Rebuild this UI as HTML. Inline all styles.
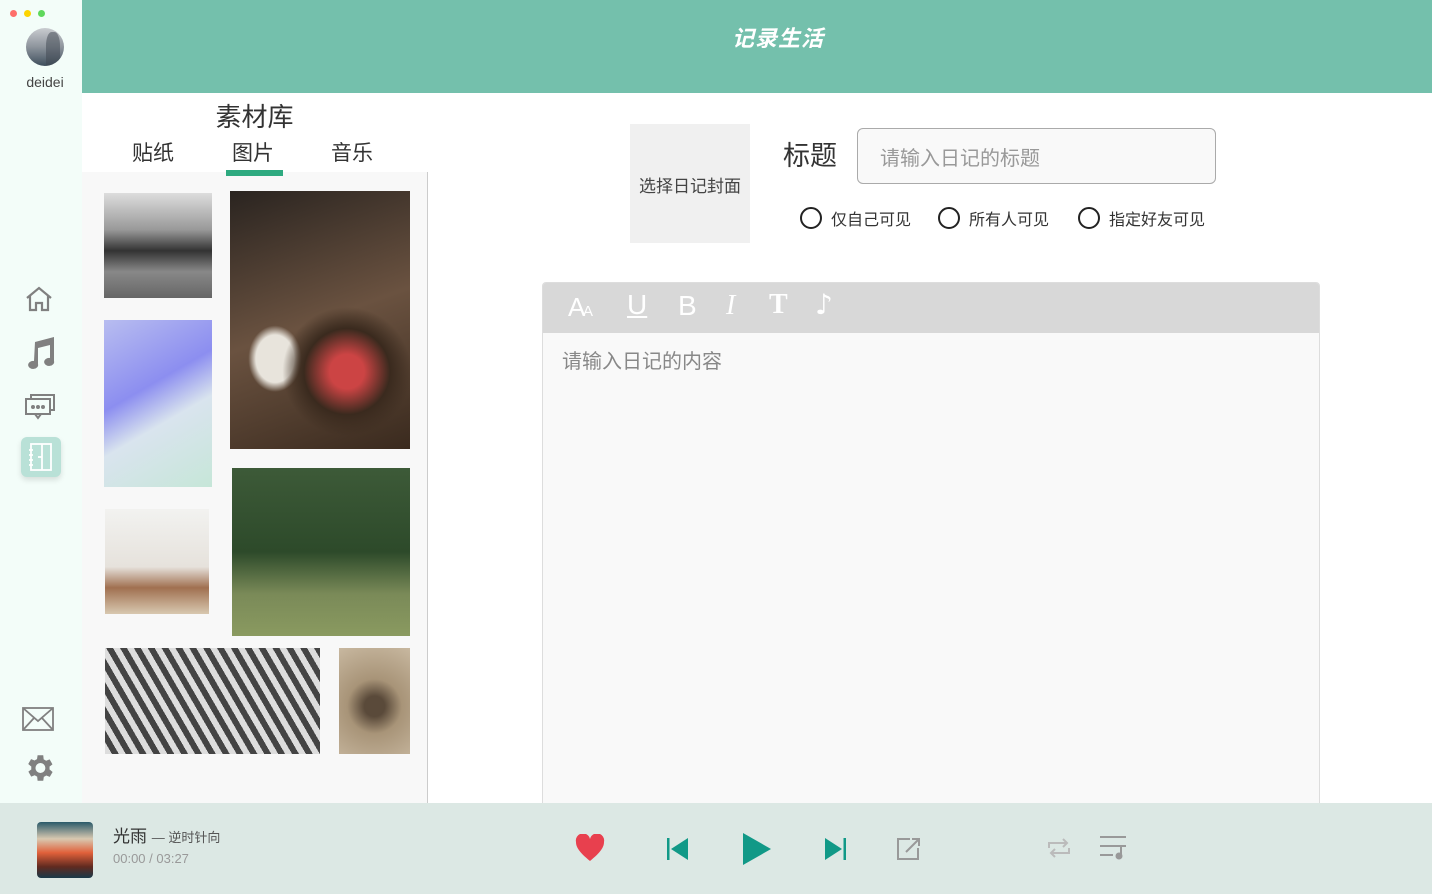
<!DOCTYPE html>
<html><head><meta charset="utf-8"><style>
*{margin:0;padding:0;box-sizing:border-box}
body{width:1432px;height:894px;overflow:hidden;font-family:"Liberation Sans","Noto Sans CJK SC",sans-serif;background:#fff;position:relative}
.a{position:absolute}
</style></head><body>
<div class="a" style="left:0;top:0;width:82px;height:803px;background:#f3fdf9"></div>
<div class="a" style="left:10px;top:10px;width:7px;height:7px;border-radius:50%;background:#fe6e6a"></div>
<div class="a" style="left:24px;top:10px;width:7px;height:7px;border-radius:50%;background:#fdd400"></div>
<div class="a" style="left:38px;top:10px;width:7px;height:7px;border-radius:50%;background:#5fd85c"></div>
<div class="a" style="left:26px;top:28px;width:38px;height:38px;border-radius:50%;background:linear-gradient(180deg,#c9ccd0 0%,#8d949c 50%,#3e4e5c 100%);overflow:hidden"><div style="position:absolute;left:20px;top:4px;width:14px;height:34px;border-radius:40% 40% 0 0;background:#3e4650;opacity:.5"></div></div>
<div class="a" style="left:0;top:74px;width:90px;text-align:center;font-size:14px;color:#444">deidei</div>
<svg class="a" style="left:24px;top:284px" width="30" height="30" viewBox="0 0 30 30" fill="none" stroke="#808080" stroke-width="2.2"><path d="M3 14 L15 4 L27 14 M6 12 V26 H12 V19 H18 V26 H24 V12"/></svg>
<svg class="a" style="left:24px;top:334px" width="34" height="36" viewBox="0 0 34 36" fill="#808080"><path d="M11 8 L30 3 V27 A5 4 0 1 1 26 24 V11 L14 14 V30 A5 4 0 1 1 10 27 Z"/></svg>
<svg class="a" style="left:24px;top:392px" width="32" height="30" viewBox="0 0 32 30" fill="none" stroke="#808080" stroke-width="2"><rect x="2" y="7" width="24" height="15"/><path d="M7 7 V3 H30 V18 H26"/><path d="M11 22 L14 26 L17 22"/><circle cx="9" cy="15" r="1" fill="#808080"/><circle cx="14" cy="15" r="1" fill="#808080"/><circle cx="19" cy="15" r="1" fill="#808080"/></svg>
<div class="a" style="left:21px;top:437px;width:40px;height:40px;border-radius:6px;background:#b9e1d7;box-shadow:0 3px 6px rgba(0,0,0,.12)"></div>
<svg class="a" style="left:27px;top:442px" width="28" height="30" viewBox="0 0 28 30" fill="none" stroke="#fff" stroke-width="1.8"><rect x="4" y="2" width="20" height="26"/><path d="M15 2 V28 M2 8 H6 M2 13 H6 M2 18 H6 M2 23 H6 M11 15 H15"/></svg>
<svg class="a" style="left:22px;top:706px" width="32" height="26" viewBox="0 0 32 26" fill="none" stroke="#808080" stroke-width="1.8"><rect x="1" y="2" width="30" height="22"/><path d="M1 2 L16 15 L31 2 M1 24 L12 12 M31 24 L20 12"/></svg>
<svg class="a" style="left:22px;top:751px" width="34" height="34" viewBox="0 0 24 24" fill="#808080"><path d="M19.4 13a7.5 7.5 0 0 0 0-2l2.1-1.6-2-3.5-2.5 1a7 7 0 0 0-1.7-1L15 3h-4l-.4 2.7a7 7 0 0 0-1.7 1l-2.5-1-2 3.5L6.6 11a7.5 7.5 0 0 0 0 2l-2.1 1.6 2 3.5 2.5-1a7 7 0 0 0 1.7 1L11 21h4l.4-2.7a7 7 0 0 0 1.7-1l2.5 1 2-3.5zM13 15.5a3.5 3.5 0 1 1 0-7 3.5 3.5 0 0 1 0 7z"/></svg>

<div class="a" style="left:82px;top:0;width:1350px;height:93px;background:#74c0ac"></div>
<div class="a" style="left:82px;top:21px;width:1392px;text-align:center;font-size:22px;font-weight:bold;font-style:italic;color:#fff;letter-spacing:1px">记录生活</div>

<div class="a" style="left:82px;top:97px;width:345px;text-align:center;font-size:26px;color:#333">素材库</div>
<div class="a" style="left:132px;top:137px;font-size:21px;color:#333">贴纸</div>
<div class="a" style="left:232px;top:137px;font-size:21px;color:#333">图片</div>
<div class="a" style="left:331px;top:137px;font-size:21px;color:#333">音乐</div>
<div class="a" style="left:82px;top:172px;width:346px;height:631px;background:#f8f8f8;border-right:1px solid #ccc"></div>
<div class="a" style="left:226px;top:170px;width:57px;height:6px;background:#2eaa80;z-index:2"></div>
<div class="a" style="left:104px;top:193px;width:108px;height:105px;background:linear-gradient(180deg,#ddd 0%,#999 35%,#333 55%,#888 75%,#666 100%)"></div>
<div class="a" style="left:230px;top:191px;width:180px;height:258px;background:radial-gradient(circle at 65% 70%,#c44 0 8%,#3a2a1e 20%,transparent 30%),radial-gradient(ellipse at 25% 65%,#e8e4dc 0 10%,transparent 14%),linear-gradient(160deg,#2a2420,#6a5240 50%,#3a2a1e)"></div>
<div class="a" style="left:104px;top:320px;width:108px;height:167px;background:linear-gradient(150deg,#b8bdf0 0%,#8c8ef0 40%,#d9e4ee 60%,#c6e6d8 100%)"></div>
<div class="a" style="left:232px;top:468px;width:178px;height:168px;background:linear-gradient(180deg,#3d5a38 0%,#2d4a2a 50%,#7a8a58 75%,#8a9a60 100%)"></div>
<div class="a" style="left:105px;top:509px;width:104px;height:105px;background:linear-gradient(180deg,#f2f2f0 0%,#e6e2dc 55%,#a07050 75%,#d8c8b0 100%)"></div>
<div class="a" style="left:105px;top:648px;width:215px;height:106px;background:repeating-linear-gradient(60deg,#ddd 0 6px,#444 6px 12px)"></div>
<div class="a" style="left:339px;top:648px;width:71px;height:106px;background:radial-gradient(circle at 50% 55%,#5a4a3a 0 15%,#a89478 40%,#c8b8a0 100%)"></div>

<div class="a" style="left:630px;top:124px;width:120px;height:119px;background:#f0f0f0"></div>
<div class="a" style="left:630px;top:172px;width:120px;text-align:center;font-size:17px;color:#444">选择日记封面</div>
<div class="a" style="left:783px;top:134px;font-size:27px;color:#333">标题</div>
<div class="a" style="left:857px;top:128px;width:359px;height:56px;border:1px solid #aaa;border-radius:6px;background:#f9f9f9"></div>
<div class="a" style="left:880px;top:142px;font-size:20px;color:#999">请输入日记的标题</div>
<div class="a" style="left:800px;top:207px;width:22px;height:22px;border:2px solid #222;border-radius:50%"></div>
<div class="a" style="left:831px;top:206px;font-size:16px;color:#333">仅自己可见</div>
<div class="a" style="left:938px;top:207px;width:22px;height:22px;border:2px solid #222;border-radius:50%"></div>
<div class="a" style="left:969px;top:206px;font-size:16px;color:#333">所有人可见</div>
<div class="a" style="left:1078px;top:207px;width:22px;height:22px;border:2px solid #222;border-radius:50%"></div>
<div class="a" style="left:1109px;top:206px;font-size:16px;color:#333">指定好友可见</div>

<div class="a" style="left:542px;top:282px;width:778px;height:525px;background:#f9f9f9;border:1px solid #ddd;border-radius:4px;overflow:hidden">
<div style="height:50px;background:#d8d8d8;position:relative;color:#fff;font-size:28px">
<span class="a" style="left:25px;top:9px;font-size:26px">A</span><span class="a" style="left:40px;top:20px;font-size:15px">A</span>
<span class="a" style="left:84px;top:6px;text-decoration:underline">U</span>
<span class="a" style="left:135px;top:7px">B</span>
<span class="a" style="left:183px;top:7px;font-family:'Liberation Serif';font-style:italic">I</span>
<span class="a" style="left:226px;top:6px;font-family:'Liberation Serif';font-weight:bold">T</span>
<span class="a" style="left:272px;top:5px;font-family:'DejaVu Sans'">♪</span>
</div>
<div style="padding:12px 19px;font-size:20px;color:#888">请输入日记的内容</div>
</div>

<div class="a" style="left:0;top:803px;width:1432px;height:91px;background:#dce8e4"></div>
<div class="a" style="left:37px;top:822px;width:56px;height:56px;border-radius:4px;background:linear-gradient(180deg,#2a5a6a 0%,#d8c8b0 30%,#e0603a 55%,#602a20 80%,#1a3a4a 100%)"></div>
<div class="a" style="left:113px;top:822px;font-size:17px;color:#333">光雨 <span style="font-size:13px;color:#555">— 逆时针向</span></div>
<div class="a" style="left:113px;top:851px;font-size:13px;color:#999">00:00 / 03:27</div>
<svg class="a" style="left:575px;top:834px" width="30" height="28" viewBox="0 0 30 28"><path d="M15 27 C4 18 1 13 1 8 A7 7 0 0 1 15 5 A7 7 0 0 1 29 8 C29 13 26 18 15 27Z" fill="#e8404e"/></svg>
<svg class="a" style="left:666px;top:837px" width="24" height="24" viewBox="0 0 24 24" fill="#119987"><rect x="1" y="1" width="2.5" height="22"/><path d="M22 1 V23 L5 12Z"/></svg>
<svg class="a" style="left:741px;top:832px" width="32" height="34" viewBox="0 0 32 34" fill="#119987"><path d="M2 1 V33 L30 17Z"/></svg>
<svg class="a" style="left:823px;top:837px" width="24" height="24" viewBox="0 0 24 24" fill="#119987"><rect x="20.5" y="1" width="2.5" height="22"/><path d="M2 1 V23 L19 12Z"/></svg>
<svg class="a" style="left:896px;top:836px" width="26" height="26" viewBox="0 0 26 26" fill="none" stroke="#999" stroke-width="2"><path d="M14 3 H2 V23 H22 V12 M10 16 L23 3 M16 3 H23 V10"/></svg>
<svg class="a" style="left:1045px;top:834px" width="28" height="28" viewBox="0 0 28 28" fill="none" stroke="#bbb" stroke-width="2"><path d="M4 14 V9 H22 M18 5 L22 9 L18 13 M24 14 V19 H6 M10 23 L6 19 L10 15"/></svg>
<svg class="a" style="left:1099px;top:834px" width="30" height="28" viewBox="0 0 30 28" fill="none" stroke="#999" stroke-width="2"><path d="M1 3 H27 M1 12 H27 M1 21 H14 M22 12 V22"/><circle cx="20" cy="22" r="2.5" fill="#999"/></svg>
</body></html>
